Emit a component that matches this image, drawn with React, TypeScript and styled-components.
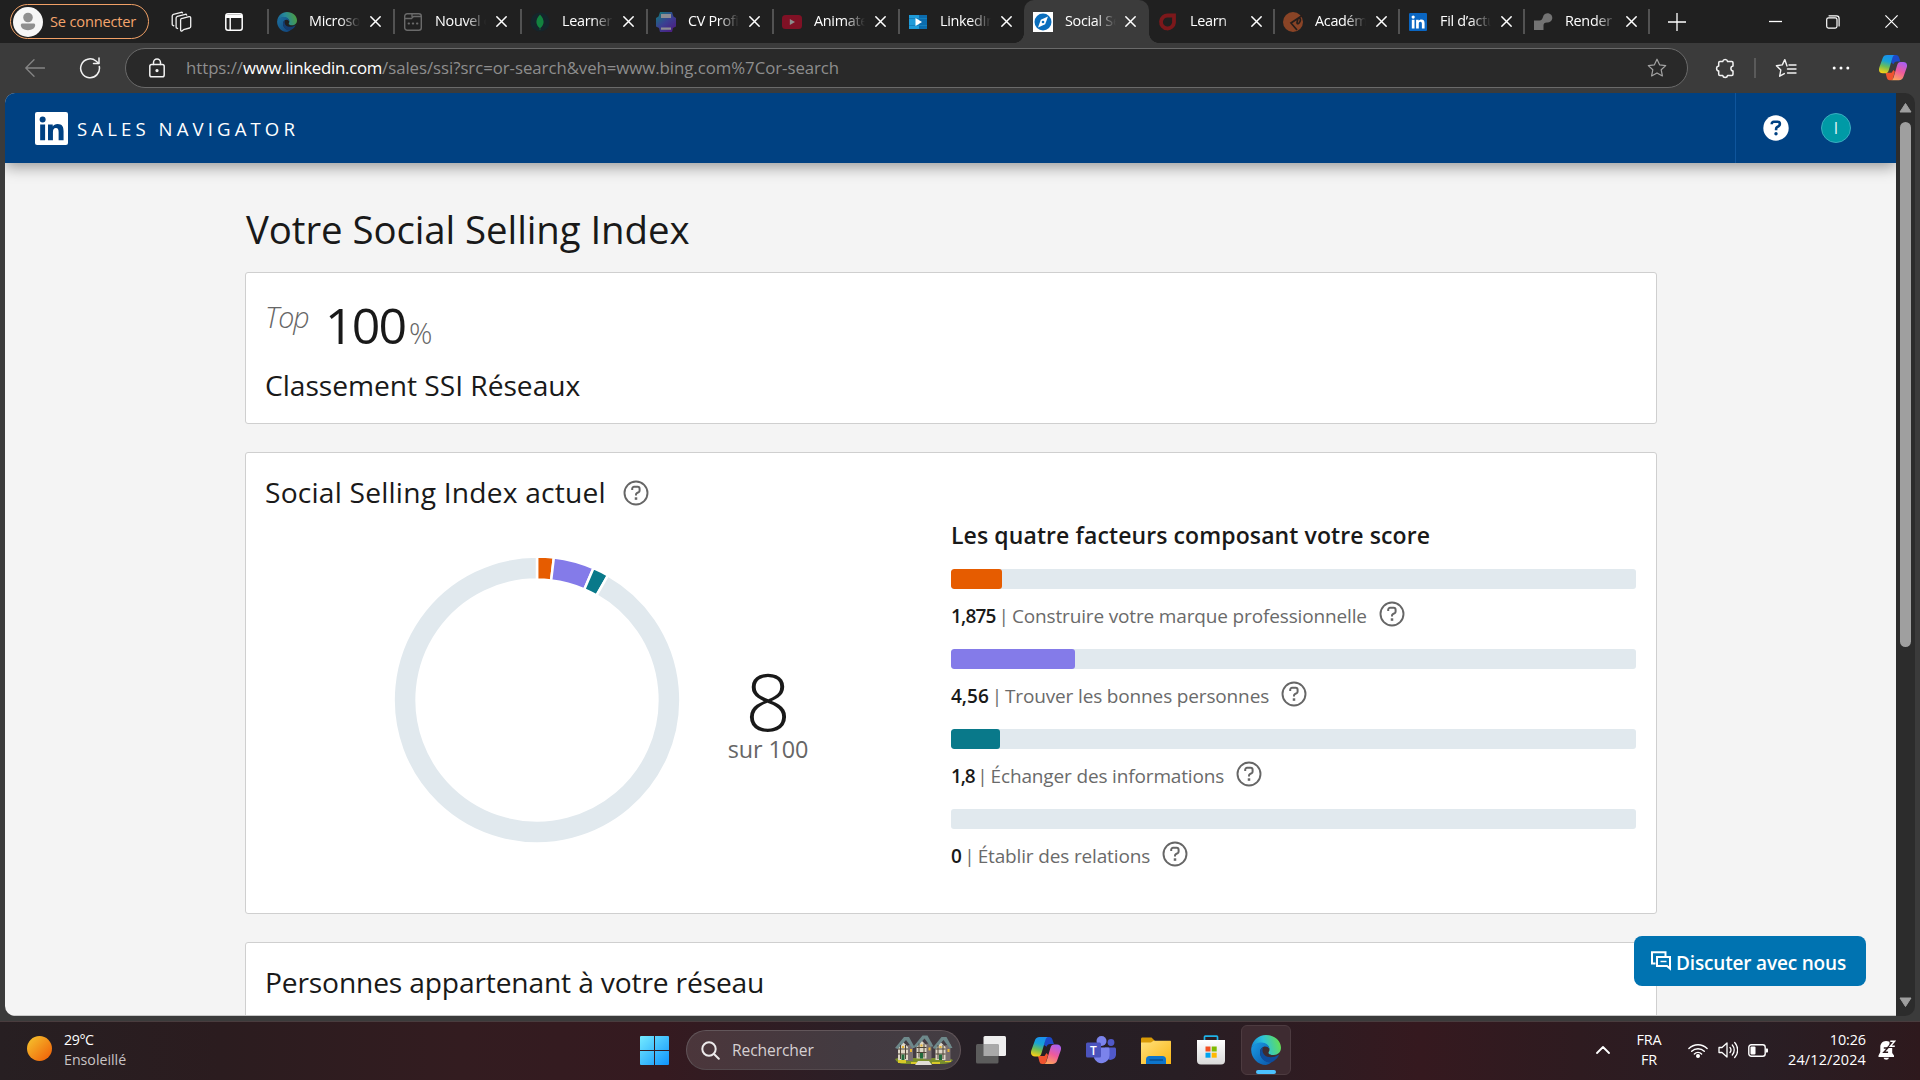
import React from "react";
import styled, { createGlobalStyle } from "styled-components";

const GlobalStyle = createGlobalStyle`
  * { box-sizing: border-box; }
  body {
    margin: 0;
    background: #3b3b3b;
    font-family: "Open Sans", "Noto Sans", sans-serif;
    overflow: hidden;
  }
  svg { display: block; flex: none; }
`;

const Screen = styled.div`
  width: 1920px;
  height: 1080px;
  display: flex;
  flex-direction: column;
  overflow: hidden;
`;

const Text = styled.span<{ $size: number; $ls?: number; $color?: string; $weight?: number; $lh?: number }>`
  font-size: ${(p) => p.$size}px;
  letter-spacing: ${(p) => p.$ls ?? 0}px;
  color: ${(p) => p.$color ?? "inherit"};
  font-weight: ${(p) => p.$weight ?? 400};
  line-height: ${(p) => (p.$lh ? `${p.$lh}px` : "normal")};
  white-space: pre;
`;

/* ---------- tab strip ---------- */

const TabStrip = styled.div`
  height: 43px;
  flex: none;
  background: #202020;
  display: flex;
  align-items: center;
`;

const SignIn = styled.div`
  width: 139px;
  height: 35px;
  margin-left: 10px;
  padding-left: 2px;
  border: 1px solid #f0a066;
  border-radius: 18px;
  display: flex;
  align-items: center;
  gap: 7px;
  color: #f4a56d;
`;

const SignInLabel = styled.span`
  padding-bottom: 2px;
  font-size: 14.6px;
  letter-spacing: -0.17px;
  white-space: pre;
`;

const IconSlot = styled.div<{ $w: number; $end?: boolean; $mr?: number }>`
  width: ${(p) => p.$w}px;
  margin-right: ${(p) => p.$mr ?? 0}px;
  flex: none;
  display: flex;
  justify-content: ${(p) => (p.$end ? "flex-end" : "center")};
  align-items: center;
`;

const TabBox = styled.div<{ $w: number; $active?: boolean; $line?: boolean }>`
  width: ${(p) => p.$w}px;
  height: 43px;
  flex: none;
  display: flex;
  align-items: center;
  padding-left: 9px;
  position: relative;
  background: ${(p) => (p.$active ? "#3b3b3b" : "transparent")};
  border-radius: ${(p) => (p.$active ? "10px 10px 0 0" : "0")};
  &::before {
    content: "";
    display: ${(p) => (p.$line ? "block" : "none")};
    position: absolute;
    left: -1px;
    top: 9px;
    width: 2px;
    height: 25px;
    background: #525252;
  }
`;

const Flare = styled.i<{ $side: "left" | "right" }>`
  position: absolute;
  bottom: 0;
  ${(p) => p.$side}: -10px;
  width: 10px;
  height: 10px;
  background: radial-gradient(circle at ${(p) => (p.$side === "left" ? "0 0" : "100% 0")}, #202020 9.6px, #3b3b3b 10.2px);
`;

const TabTitle = styled.span<{ $gap: number }>`
  width: 51px;
  margin: 0 ${(p) => p.$gap}px 2px 12px;
  font-size: 14.4px;
  letter-spacing: -0.3px;
  line-height: 20px;
  color: #fff;
  overflow: hidden;
  white-space: pre;
  mask-image: linear-gradient(90deg, #000 60%, transparent 100%);
`;

const WindowButtons = styled.div`
  margin-left: auto;
  display: flex;
  & > div { width: 58px; display: flex; justify-content: center; }
`;

/* ---------- toolbar ---------- */

const Toolbar = styled.div`
  height: 50px;
  flex: none;
  background: #3b3b3b;
  display: flex;
  align-items: center;
`;

const AddressBar = styled.div`
  width: 1563px;
  height: 40px;
  flex: none;
  margin-left: 16px;
  border: 1px solid #6a6a6a;
  border-radius: 20px;
  background: #292929;
  display: flex;
  align-items: center;
  padding: 0 20px 0 23px;
`;

const Url = styled.div`
  flex: 1;
  margin-left: 21px;
  font-size: 16.8px;
  letter-spacing: -0.04px;
  line-height: 26px;
  color: #8e8e8e;
  & b { font-weight: 400; color: #fff; letter-spacing: -0.26px; }
`;

const ToolDivider = styled.i`
  width: 2px;
  height: 20px;
  margin-left: -8px;
  background: #5a5a5a;
`;

/* ---------- page ---------- */

const Frame = styled.div`
  height: 928px;
  flex: none;
  background: #3b3b3b;
  padding: 0 5px 5px;
`;

const Viewport = styled.div`
  height: 923px;
  display: flex;
  border-radius: 10px;
  overflow: hidden;
  background: #2c2c2c;
`;

const Page = styled.div`
  width: 1891px;
  height: 923px;
  position: relative;
  background: #f4f4f4;
  overflow: hidden;
  color: #191919;
  border-bottom: 1px solid #c9c9c9;
`;

const Header = styled.header`
  height: 70px;
  background: #004182;
  display: flex;
  align-items: center;
  padding-left: 30px;
  box-shadow: 0 4px 14px rgba(0, 0, 0, 0.38);
  position: relative;
`;

const Brand = styled.div`
  margin: 2px 0 0 9px;
  font-size: 18.6px;
  letter-spacing: 4.1px;
  line-height: 26px;
  color: #fff;
`;

const HeaderActions = styled.div`
  width: 161px;
  height: 70px;
  margin-left: auto;
  border-left: 1px solid #0f559c;
  display: flex;
  align-items: center;
  padding-left: 27px;
  gap: 32px;
`;

const Avatar = styled.div`
  width: 30px;
  height: 30px;
  border-radius: 50%;
  background: #009aa6;
  border: 1px solid #3badc0;
  display: flex;
  align-items: center;
  justify-content: center;
  color: #e8f7f8;
  font-size: 15.5px;
  line-height: 28px;
`;

const Main = styled.main`
  width: 1412px;
  margin-left: 240px;
  padding-top: 41px;
`;

const Title = styled.h1`
  margin: 0 0 18px;
  padding-left: 1px;
  font-weight: 400;
  font-size: 38.4px;
  letter-spacing: -0.08px;
  line-height: 50px;
`;

const Card = styled.section<{ $h: number }>`
  height: ${(p) => p.$h}px;
  margin-bottom: 28px;
  padding: 0 20px 0 19px;
  background: #fff;
  border: 1px solid #cfcfcf;
  border-radius: 3px;
`;

const Heading = styled.h2<{ $ls: number }>`
  margin: 0;
  font-weight: 400;
  font-size: 28.2px;
  letter-spacing: ${(p) => p.$ls}px;
  line-height: 40px;
  white-space: pre;
`;

const HeadingRow = styled.div`
  display: flex;
  align-items: center;
  gap: 17px;
  padding-top: 19px;
  & svg { margin-top: 2px; }
`;

const RankRow = styled.div`
  height: 70px;
  padding-top: 23px;
  margin-bottom: 22px;
  display: flex;
  align-items: baseline;
`;

const TopLabel = styled.em`
  align-self: flex-start;
  width: 60px;
  font-weight: 350;
  font-size: 28.6px;
  letter-spacing: -0.9px;
  line-height: 42px;
  color: #666;
`;

const Rank = styled.span`
  width: 84px;
  font-size: 50px;
  letter-spacing: -1.9px;
  line-height: 58px;
`;

const Percent = styled.span`
  font-weight: 350;
  font-size: 29px;
  color: #666;
`;

const ScoreBody = styled.div`
  display: flex;
  height: 400px;
`;

const ChartSide = styled.div`
  width: 685px;
  display: flex;
  padding: 44px 0 0 128px;
`;

const ScoreBlock = styled.div`
  width: 120px;
  margin: 112px 0 0 27px;
  display: flex;
  flex-direction: column;
  align-items: center;
`;

const FactorSide = styled.div`
  width: 685px;
  flex: none;
  margin-left: auto;
  padding-top: 6px;
`;

const FactorTitle = styled.h3`
  margin: 0 0 17px;
  font-weight: 600;
  font-size: 23px;
  letter-spacing: 0.1px;
  line-height: 34px;
  white-space: pre;
`;

const Factor = styled.div`
  height: 80px;
`;

const Track = styled.div`
  height: 20px;
  margin-bottom: 6px;
  border-radius: 3px;
  background: #e1e9ee;
  overflow: hidden;
`;

const Fill = styled.div<{ $w: number; $c: string }>`
  width: ${(p) => p.$w}px;
  height: 20px;
  border-radius: 3px;
  background: ${(p) => p.$c};
`;

const FactorLabel = styled.div`
  height: 38px;
  display: flex;
  align-items: center;
`;

const FactorText = styled.span<{ $ls: number }>`
  font-size: 19px;
  line-height: 38px;
  letter-spacing: -0.15px;
  color: #6a6a6a;
  padding-top: 3px;
  margin-right: 12px;
  white-space: pre;
  & b { font-weight: 600; color: #191919; letter-spacing: ${(p) => p.$ls}px; }
  & i { font-style: normal; word-spacing: -1.8px; }
`;

const ChatButton = styled.button`
  position: absolute;
  left: 1629px;
  top: 843px;
  width: 232px;
  height: 50px;
  border: 0;
  border-radius: 8px;
  background: #0073b1;
  color: #fff;
  font-family: inherit;
  display: flex;
  align-items: center;
  padding: 0 0 0 17px;
  gap: 5px;
  & span { padding-top: 4px; }
`;

const ScrollRail = styled.div`
  width: 19px;
  display: flex;
  flex-direction: column;
  align-items: center;
  padding: 10px 0 9px;
`;

const Thumb = styled.div`
  width: 11px;
  height: 525px;
  margin: 9px 0 auto;
  border-radius: 6px;
  background: #9f9f9f;
`;

/* ---------- taskbar ---------- */

const Taskbar = styled.footer`
  height: 59px;
  flex: none;
  border-top: 1px solid #493c3e;
  padding-bottom: 2px;
  background: linear-gradient(90deg, #271f22 0, #2b1c1f 220px, #331c20 460px, #351a20 660px, #2b1f26 860px, #251f25 1000px, #281e24 1180px, #35191f 1420px, #2e1b20 1580px, #291e24 1760px, #2e191d 1920px);
  display: flex;
  align-items: center;
  color: #fff;
`;

const Weather = styled.div`
  width: 613px;
  padding-left: 27px;
  display: flex;
  align-items: center;
  gap: 12px;
`;

const Sun = styled.i`
  width: 25px;
  height: 25px;
  margin-bottom: 3px;
  border-radius: 50%;
  background: linear-gradient(135deg, #f5bd2b 10%, #f06a0c 85%);
`;

const Stack = styled.div<{ $align?: string; $w?: number }>`
  display: flex;
  flex-direction: column;
  align-items: ${(p) => p.$align ?? "flex-start"};
  width: ${(p) => (p.$w ? `${p.$w}px` : "auto")};
`;

const SearchBox = styled.div`
  width: 275px;
  height: 40px;
  margin: 0 15px 0 17px;
  padding: 0 7px 0 14px;
  border: 1px solid #62565a;
  border-bottom-color: #54494d;
  border-radius: 20px;
  background: linear-gradient(90deg, #4b363b, #433b41 60%, #443d43);
  display: flex;
  align-items: center;
`;

const SearchLabel = styled.span`
  flex: 1;
  margin-left: 12px;
  font-size: 15.6px;
  letter-spacing: -0.1px;
  color: #d6d0d2;
`;

const TaskIcons = styled.div`
  display: flex;
  align-items: center;
`;

const EdgeSlot = styled.span`
  width: 50px;
  height: 50px;
  border: 1px solid #4d3b40;
  border-radius: 6px;
  background: #3e2b31;
  display: flex;
  flex-direction: column;
  align-items: center;
  padding-top: 9px;
`;

const RunningBar = styled.i`
  width: 20px;
  height: 4px;
  margin-top: 5px;
  border-radius: 2px;
  background: #4cc2ff;
`;

const Tray = styled.div`
  margin-left: auto;
  display: flex;
  align-items: center;
  padding-right: 24px;
`;

/* ---------- drawings ---------- */

const stroke = { fill: "none", strokeLinecap: "round" as const, strokeLinejoin: "round" as const };

const Cross = ({ size = 10, color = "#fff", w = 1.5 }: { size?: number; color?: string; w?: number }) => (
  <svg width={size} height={size} viewBox="0 0 10 10">
    <path d="M.3.3l9.4 9.4M9.7.3L.3 9.7" stroke={color} strokeWidth={(w * 10) / size} fill="none" />
  </svg>
);

const HelpOutline = () => (
  <svg width="26" height="26" viewBox="0 0 26 26" fill="none" strokeLinejoin="round" stroke="#666">
    <circle cx="13" cy="13" r="11.5" strokeWidth="1.9" />
    <path d="M9.2 10V8.7c0-1.1.8-1.9 1.9-1.9h3.600c1.100 0 1.900.8 1.900 1.900v1.800c0 .7-.3 1.200-.9 1.600l-1.800 1.100c-.6.4-.9.8-.9 1.500v.9" strokeWidth="2" />
    <path d="M13 17.300v2.500" strokeWidth="2.500" />
  </svg>
);

const InLogo = ({ size, bg, fg }: { size: number; bg: string; fg: string }) => (
  <svg width={size} height={size} viewBox="0 0 32 32">
    <rect width="32" height="32" rx="2" fill={bg} />
    <circle cx="7.400" cy="7.300" r="2.900" fill={fg} />
    <path fill={fg} d="M5 12h4.800v15.400H5zM12.600 12h4.600v2.100c.8-1.400 2.500-2.500 4.700-2.500 4.500 0 5.800 2.700 5.800 7v8.800h-4.800v-7.800c0-2.300-.5-4-2.600-4-2.200 0-2.900 1.600-2.900 4v7.800h-4.800z" />
  </svg>
);

const EdgeLogo = ({ size, id }: { size: number; id: string }) => (
  <svg width={size} height={size} viewBox="0 0 30 30">
    <defs>
      <linearGradient id={`${id}t`} x1="0" y1=".6" x2="1" y2=".4">
        <stop offset="0" stopColor="#1688d8" />
        <stop offset=".45" stopColor="#2cc3da" />
        <stop offset="1" stopColor="#66e04f" />
      </linearGradient>
      <linearGradient id={`${id}b`} x1="0" y1="0" x2="1" y2="1">
        <stop offset="0" stopColor="#1a9de6" />
        <stop offset="1" stopColor="#0b55a8" />
      </linearGradient>
    </defs>
    <path fill={`url(#${id}t)`} d="M.3 13.200C1.200 5.500 7.300 0 15 0c8.700 0 15 6 15 12.800 0 4.200-3.200 7.200-7.200 7.200-3.400 0-5.300-1-5.300-2.300 0-.7 1-1.100 1-3.100 0-3.400-3.400-6.300-8-6.300C5.600 8.300 1.700 10.600.3 13.200z" />
    <path fill={`url(#${id}b)`} d="M.3 13.200C1.500 9.900 5.600 7.400 10.500 7.400c4.700 0 8 3 8 6.800-1-1.900-2.700-2.600-4.200-2.600-3 0-5.300 2.500-5.300 6 0 5.800 5.800 9.900 11.600 9.700A14.500 14.500 0 0 1 15 30C6.400 30-.8 22 .3 13.200z" />
    <path fill="#0e4c9c" d="M9 17.600c0-2.500 1-4.500 3.200-5.600-.5 1-.7 2-.7 3.300 0 4.200 3.600 7 8.100 7 2.900 0 5.300-.8 7.400-2.200.6-.3 1 .1.7.7-1.700 3.100-4.500 5.600-7.900 6.700C14 28 9 23.200 9 17.600z" />
  </svg>
);

const Copilot = ({ w, id }: { w: number; id: string }) => (
  <svg width={w} height={(w * 27) / 30} viewBox="0 0 30 27">
    <defs>
      <linearGradient id={`${id}a`} x1=".6" y1="0" x2=".35" y2="1">
        <stop offset="0" stopColor="#1a8fee" />
        <stop offset=".35" stopColor="#17a3d6" />
        <stop offset=".65" stopColor="#6dbd56" />
        <stop offset="1" stopColor="#f6cf17" />
      </linearGradient>
      <linearGradient id={`${id}b`} x1=".7" y1="0" x2=".3" y2="1">
        <stop offset="0" stopColor="#a95ff0" />
        <stop offset=".5" stopColor="#ee5a9c" />
        <stop offset="1" stopColor="#ffa35c" />
      </linearGradient>
    </defs>
    <path fill="#1c49c8" d="M14 0h4.200c1.900 0 2.700 1 3.300 2.800L22.900 7h-3.700c-2 0-3 1-3.600 2.800L13 8z" />
    <path fill="#f0532f" d="M7 19h6.500l2-3 1.500 2-2 7.300c-.4 1.200-1 1.700-2.200 1.700h-1.500c-1.700 0-2.400-.8-2.900-2.500z" />
    <path fill={`url(#${id}a)`} d="M8.800 0h8.400c-1.500.2-2.300 1.300-2.800 3l-3.900 13.300c-.7 2.200-1.600 3.200-3.700 3.200H4c-3.500 0-4.700-2.700-3.700-6L3.800 3.700C4.600 1.200 6 0 8.800 0z" />
    <path fill={`url(#${id}b)`} d="M21.200 27h-8.400c1.500-.2 2.300-1.300 2.800-3l3.900-13.300c.7-2.200 1.600-3.200 3.700-3.200H26c3.500 0 4.700 2.700 3.700 6l-3.500 9.800c-.8 2.500-2.200 3.700-5 3.700z" />
  </svg>
);

const FadedEdge = styled.span`
  display: block;
  opacity: 0.65;
`;

const Favicon = ({ kind }: { kind: string }) => {
  switch (kind) {
    case "edge":
      return <FadedEdge><EdgeLogo size={20} id="ft" /></FadedEdge>;
    case "newtab":
      return (
        <svg width="20" height="20" viewBox="0 0 20 20" {...stroke} stroke="#6a6a6a" strokeWidth="1.400">
          <rect x="1.700" y="1.700" width="16.600" height="16.600" rx="2.500" />
          <path d="M2 6.500h6.500l2-2H18M9 2v2.500" />
          <path d="M5.500 11.500h.6M9.700 11.500h.6M13.900 11.500h.6" strokeWidth="1.800" />
        </svg>
      );
    case "mongo":
      return (
        <svg width="20" height="20" viewBox="0 0 20 20">
          <circle cx="10" cy="10" r="9.500" fill="#15252b" />
          <path fill="#12833f" d="M10 2.500c2.500 2.800 3.600 5 3.600 7.500 0 2.600-1.600 4.700-3.300 6V18h-.6v-2c-1.700-1.300-3.300-3.400-3.300-6 0-2.500 1.100-4.700 3.600-7.500z" />
        </svg>
      );
    case "cv":
      return (
        <svg width="20" height="20" viewBox="0 0 20 20">
          <defs>
            <linearGradient id="cvg" x1="0" y1="0" x2=".8" y2="1">
              <stop offset="0" stopColor="#0d8078" />
              <stop offset=".55" stopColor="#3b3f92" />
              <stop offset="1" stopColor="#4c1d80" />
            </linearGradient>
          </defs>
          <path fill="url(#cvg)" d="M4 0h12l1.500 4.500L20 6v8.500l-3 1.500-1 4H4l-1-4-3-1.500V6l2.500-1.500z" />
          <path fill="#8d8d94" d="M5 2h10v4H5zM5 15.500h10v2.300H5z" />
        </svg>
      );
    case "youtube":
      return (
        <svg width="20" height="20" viewBox="0 0 20 20">
          <rect y="3" width="20" height="14" rx="3.500" fill="#801125" />
          <path d="M7.800 7v6l5.200-3z" fill="#8d8d8d" />
        </svg>
      );
    case "learning":
      return (
        <svg width="20" height="20" viewBox="0 0 20 20">
          <path fill="#1f9bd8" d="M1 3h18v14H1z" />
          <path fill="#0b6cae" d="M11 3h8v14h-8z" />
          <path stroke="#1580bd" d="M1 6.500h18M1 13.500h18" />
          <path d="M7.500 6v8l6.500-4z" fill="#fff" />
        </svg>
      );
    case "compass":
      return (
        <svg width="20" height="20" viewBox="0 0 20 20">
          <path fill="#fff" d="M0 0h20v20H0z" />
          <circle cx="10" cy="10" r="8.500" fill="#0a6ebd" />
          <path fill="#fff" d="M15 4.500l-2.800 7.700L5 15.500l2.800-7.700z" />
          <circle cx="10" cy="10" r="1.300" fill="#0a6ebd" />
        </svg>
      );
    case "learn":
      return (
        <svg width="20" height="20" viewBox="0 0 20 20">
          <path d="M10 3.500h6v7A6.500 6.500 0 1 1 10 3.500z" fill="none" stroke="#7c181b" strokeWidth="3.800" />
        </svg>
      );
    case "academy":
      return (
        <svg width="20" height="20" viewBox="0 0 20 20">
          <circle cx="10" cy="10" r="10" fill="#8a4426" />
          <path d="M20 3L8 11l6 7M15 6.500c2-1 3 .5 2 3s-3 3-3 1z" fill="none" stroke="#271e1b" strokeWidth="1.700" />
        </svg>
      );
    case "linkedin":
      return <InLogo size={18} bg="#0a66c2" fg="#fff" />;
    default:
      return (
        <svg width="20" height="20" viewBox="0 0 20 20">
          <path fill="#737373" d="M1 8.500h5.500c2-.2 3-1.500 3.500-3.500A4.700 4.700 0 1 1 14 10.500c-2.500 0-3.500 1-3.500 3V18H1z" />
        </svg>
      );
  }
};

const tabs = [
  { t: "Microsoft", k: "edge", w: 126 },
  { t: "Nouvel onglet", k: "newtab", w: 127 },
  { t: "Learner", k: "mongo", w: 126 },
  { t: "CV Profil", k: "cv", w: 126 },
  { t: "Animated", k: "youtube", w: 126 },
  { t: "LinkedIn", k: "learning", w: 125 },
  { t: "Social Selling", k: "compass", w: 125 },
  { t: "Learn", k: "learn", w: 125 },
  { t: "Académie", k: "academy", w: 125 },
  { t: "Fil d’actualité", k: "linkedin", w: 125 },
  { t: "Render", k: "render", w: 125 },
];

const TabRow = () => (
  <TabStrip>
    <SignIn>
      <svg width="30" height="30" viewBox="0 0 30 30">
        <circle cx="15" cy="15" r="15" fill="#f7f7f7" />
        <circle cx="15" cy="10.500" r="4.800" fill="#909090" />
        <path fill="#909090" d="M9.500 16.500h11c1 0 1.700.7 1.700 1.600 0 3-3 5.200-7.200 5.200s-7.200-2.200-7.200-5.200c0-.9.700-1.600 1.700-1.600z" />
      </svg>
      <SignInLabel>Se connecter</SignInLabel>
    </SignIn>
    <IconSlot $w={64}>
      <svg width="22" height="22" viewBox="0 0 22 22" {...stroke} stroke="#f0f0f0" strokeWidth="1.300">
        <path d="M12.500 7.300l6.500-1.600c.9-.2 1.700.3 1.700 1.300v8.600c0 .7-.4 1.200-1 1.400l-6.200 1.700-1.500 1.200c-.8.5-1.400 0-1.400-.8V9c0-.9.500-1.500 1.300-1.700z" />
        <path d="M7.600 17.500l-.7-.3c-.6-.2-.8-.6-.8-1.200V7c0-.9.400-1.400 1.200-1.700l8-2c.7-.1 1.200.1 1.400.8M3.800 14.800l-.8-.4c-.6-.2-.8-.6-.8-1.200V5c0-.9.400-1.400 1.200-1.700l7.800-2c.6-.1 1 0 1.300.5" />
      </svg>
    </IconSlot>
    <IconSlot $w={41}>
      <svg width="18" height="18" viewBox="0 0 18 18">
        <rect x=".8" y=".8" width="16.400" height="16.400" rx="2.200" fill="none" stroke="#fff" strokeWidth="1.500" />
        <path fill="#fff" d="M1 1.500h16V5H1zM4.500 5h1.400v12H4.500z" />
      </svg>
    </IconSlot>
    <IconSlot $w={14} />
    {tabs.map((tab, i) => (
      <TabBox key={tab.t} $w={tab.w} $active={i === 6} $line={i !== 6 && i !== 7}>
        {i === 6 && <Flare $side="left" />}
        {i === 6 && <Flare $side="right" />}
        <IconSlot $w={20}><Favicon kind={tab.k} /></IconSlot>
        <TabTitle $gap={i === 6 ? 9 : 10}>{tab.t}</TabTitle>
        <Cross size={11} />
      </TabBox>
    ))}
    <TabBox $w={56} $line>
      <IconSlot $w={38}>
        <svg width="18" height="18" viewBox="0 0 18 18"><path d="M9 0v18M0 9h18" stroke="#fff" strokeWidth="1.300" /></svg>
      </IconSlot>
    </TabBox>
    <WindowButtons>
      <div><svg width="13" height="12"><path d="M0 6.500h13" stroke="#fff" strokeWidth="1.300" /></svg></div>
      <div>
        <svg width="14" height="14" viewBox="0 0 14 14" {...stroke} stroke="#fff" strokeWidth="1.200">
          <rect x=".7" y="2.800" width="10.300" height="10.300" rx="1.800" />
          <path d="M3 .8h7.500c1.600 0 2.600 1 2.600 2.600V11" />
        </svg>
      </div>
      <div><Cross size={13} w={1.2} /></div>
    </WindowButtons>
  </TabStrip>
);

const star = "M10 1.200l2.600 5.600 6.100.8-4.500 4.200 1.200 6.100L10 14.900l-5.400 3 1.200-6.100L1.300 7.600l6.100-.8z";

const ToolRow = () => (
  <Toolbar>
    <IconSlot $w={70}>
      <svg width="20" height="18" viewBox="0 0 20 18" {...stroke} stroke="#858585" strokeWidth="1.300"><path d="M9 .7L.8 9 9 17.300M1 9h18.500" /></svg>
    </IconSlot>
    <IconSlot $w={39}>
      <svg width="22" height="22" viewBox="0 0 22 22" {...stroke} stroke="#f2f2f2" strokeWidth="1.500">
        <path d="M20.300 9.500A9.400 9.400 0 1 1 17 4l2.500 2.300" />
        <path d="M20 1v5.500h-5.500" />
      </svg>
    </IconSlot>
    <AddressBar>
      <svg width="16" height="20" viewBox="0 0 16 20" {...stroke} stroke="#f2f2f2" strokeWidth="1.500">
        <rect x=".8" y="6.500" width="14.400" height="12.200" rx="1.800" />
        <path d="M4.500 6.500V4.500a3.500 3.500 0 0 1 7 0v2" />
        <circle cx="8" cy="12.600" r=".9" fill="#fff" />
      </svg>
      <Url>https://<b>www.linkedin.com</b>/sales/ssi?src=or-search&amp;veh=www.bing.com%7Cor-search</Url>
      <svg width="20" height="20" viewBox="0 0 20 20" {...stroke} stroke="#a3a3a3" strokeWidth="1.200"><path d={star} /></svg>
    </AddressBar>
    <IconSlot $w={74}>
      <svg width="20" height="21" viewBox="0 0 20 21" {...stroke} stroke="#f2f2f2" strokeWidth="1.500">
        <path d="M4.900 3.500h2.800a2.500 2.500 0 0 1 4.900 0h4.200c.7 0 1.200.5 1.200 1.200v3.200a2.600 2.600 0 0 0 0 5.100v3.300c0 .7-.5 1.200-1.200 1.200h-4.200a2.500 2.500 0 0 1-4.900 0H4.900c-.7 0-1.200-.5-1.200-1.200V13a2.600 2.600 0 0 1 0-5.100V4.700c0-.7.5-1.200 1.200-1.200z" />
      </svg>
    </IconSlot>
    <ToolDivider />
    <IconSlot $w={60}>
      <svg width="22" height="20" viewBox="0 0 22 20" {...stroke} stroke="#f2f2f2" strokeWidth="1.400">
        <path d="M12 8L9.800 1.600 7.300 6.900l-5.900.8L5.800 12l-1.100 6.200 4.600-2.600M14 7h7M12.500 11h8.500M12.500 15h8.500" />
      </svg>
    </IconSlot>
    <IconSlot $w={49}>
      <svg width="18" height="4" viewBox="0 0 18 4" fill="#fff"><circle cx="2.200" cy="2" r="1.500" /><circle cx="9" cy="2" r="1.500" /><circle cx="15.800" cy="2" r="1.500" /></svg>
    </IconSlot>
    <IconSlot $w={55}><Copilot w={28} id="ct" /></IconSlot>
  </Toolbar>
);

const ring = [
  { v: 1.875, c: "#e65c00" },
  { v: 4.56, c: "#847be9" },
  { v: 1.8, c: "#09798a" },
  { v: 91.765, c: "#e1e9ee" },
];

const Donut = () => {
  const R = 143.4;
  const r = 120.4;
  const c = 144;
  let acc = 0;
  const pt = (rad: number, a: number) => `${(c + rad * Math.sin(a)).toFixed(2)} ${(c - rad * Math.cos(a)).toFixed(2)}`;
  return (
    <svg width="288" height="288" viewBox="0 0 288 288">
      {ring.map((s) => {
        const a0 = (acc / 100) * Math.PI * 2;
        acc += s.v;
        const a1 = (acc / 100) * Math.PI * 2;
        const big = a1 - a0 > Math.PI ? 1 : 0;
        return (
          <path
            key={s.c}
            d={`M${pt(R, a0)}A${R} ${R} 0 ${big} 1 ${pt(R, a1)}L${pt(r, a1)}A${r} ${r} 0 ${big} 0 ${pt(r, a0)}Z`}
            fill={s.c}
            stroke="#fff"
            strokeWidth="2.500"
          />
        );
      })}
    </svg>
  );
};

const factors = [
  { n: "1,875", t: "Construire votre marque professionnelle", w: 51, c: "#e65c00", ls: -0.8 },
  { n: "4,56", t: "Trouver les bonnes personnes", w: 124, c: "#847be9", ls: 0 },
  { n: "1,8", t: "Échanger des informations", w: 49, c: "#09798a", ls: -1.2 },
  { n: "0", t: "Établir des relations", w: 0, c: "transparent", ls: -0.5 },
];

const SalesPage = () => (
  <Page>
    <Header>
      <InLogo size={33} bg="#fff" fg="#004182" />
      <Brand>SALES NAVIGATOR</Brand>
      <HeaderActions>
        <svg width="26" height="26" viewBox="0 0 26 26">
          <circle cx="13" cy="13" r="12.700" fill="#fff" />
          <path d="M8.800 9.300V8.700c0-1.100.8-1.900 1.900-1.900h4c1.300 0 2.200.9 2.200 2.100 0 1-.4 1.600-1.200 2.200l-1.600 1c-.7.500-1 1-1 1.900v1.200" fill="none" stroke="#004182" strokeWidth="2.600" />
          <circle cx="13" cy="18.800" r="1.700" fill="#004182" />
        </svg>
        <Avatar>I</Avatar>
      </HeaderActions>
    </Header>
    <Main>
      <Title>Votre Social Selling Index</Title>
      <Card $h={152}>
        <RankRow>
          <TopLabel>Top</TopLabel>
          <Rank>100</Rank>
          <Percent>%</Percent>
        </RankRow>
        <Heading $ls={-0.04}>Classement SSI Réseaux</Heading>
      </Card>
      <Card $h={462}>
        <HeadingRow>
          <Heading $ls={0.2}>Social Selling Index actuel</Heading>
          <HelpOutline />
        </HeadingRow>
        <ScoreBody>
          <ChartSide>
            <Donut />
            <ScoreBlock>
              <Text $size={80} $weight={300} $lh={64}>8</Text>
              <Text $size={23.4} $ls={-0.1} $color="#666" $lh={34}>sur 100</Text>
            </ScoreBlock>
          </ChartSide>
          <FactorSide>
            <FactorTitle>Les quatre facteurs composant votre score</FactorTitle>
            {factors.map((f) => (
              <Factor key={f.t}>
                <Track><Fill $w={f.w} $c={f.c} /></Track>
                <FactorLabel>
                  <FactorText $ls={f.ls}><b>{f.n}</b><i> | </i>{f.t}</FactorText>
                  <HelpOutline />
                </FactorLabel>
              </Factor>
            ))}
          </FactorSide>
        </ScoreBody>
      </Card>
      <Card $h={200}>
        <HeadingRow><Heading $ls={-0.16}>Personnes appartenant à votre réseau</Heading></HeadingRow>
      </Card>
    </Main>
    <ChatButton>
      <svg width="20" height="20" viewBox="0 0 20 20" fill="none" stroke="#fff">
        <path d="M4.500 12.500H1V1.200h13.500V5" strokeWidth="2" />
        <path d="M6 6h13v11.500l-3-2.500H6z" strokeWidth="2" />
        <path d="M9.500 10.500h6" strokeWidth="1.500" />
      </svg>
      <Text $size={19} $ls={-0.17} $weight={600} $lh={26}>Discuter avec nous</Text>
    </ChatButton>
  </Page>
);

const Houses = () => (
  <svg width="58" height="30" viewBox="0 0 58 30">
    <path fill="#7b8f2c" d="M0 24q6-3 12-1h34q8-1 12 2-2 4-12 4H10Q2 29 0 24z" />
    <path fill="#d9c928" d="M3 25h8v3H3zM16 27h6v2h-6zM37 27h8v2h-8zM50 25h6v2h-6z" />
    <path fill="#e0dcd6" d="M23 26h11l3 4H20z" />
    {[2, 20.5, 39.5].map((x, i) => (
      <g key={x} transform={`translate(${x} ${i === 1 ? -1.5 : 0})`}>
        <path fill="#796f70" d="M9 11l7-2v17H9z" />
        <path fill="#ddd6c6" d="M1 12l5-5 5 5v13H1z" />
        <path fill="#6e898b" d="M-2 13L7 2h5l6 11h-3L9 5 1 14z" />
        <path d="M1 14h10M1 19h10M3.500 10v14M8.500 10v14" stroke="#4e4436" strokeWidth="1" />
        <path fill="#e9b735" d="M5 11h2v2H5zM13 14h2v3h-2z" />
        <path fill="#216b3c" d="M4.500 19.500h3V25h-3z" />
      </g>
    ))}
  </svg>
);

const TaskRow = () => (
  <Taskbar>
    <Weather>
      <Sun />
      <Stack>
        <Text $size={14.2} $ls={-0.4} $lh={20}>29°C</Text>
        <Text $size={14.2} $ls={0} $lh={20} $color="#c9c4c5">Ensoleillé</Text>
      </Stack>
    </Weather>
    <IconSlot $w={56} $end>
      <svg width="29" height="29" viewBox="0 0 29 29">
        <defs>
          <linearGradient id="win" x1="0" y1="0" x2="1" y2="1">
            <stop offset="0" stopColor="#74ebff" /><stop offset="1" stopColor="#0f93fb" />
          </linearGradient>
        </defs>
        <path fill="url(#win)" d="M1 0h13v14H0V1a1 1 0 0 1 1-1zM15 0h13a1 1 0 0 1 1 1v13H15zM0 15h14v14H1a1 1 0 0 1-1-1zM15 15h14v13a1 1 0 0 1-1 1H15z" />
      </svg>
    </IconSlot>
    <SearchBox>
      <svg width="19" height="19" viewBox="0 0 19 19" {...stroke} stroke="#eceaeb" strokeWidth="2">
        <circle cx="8" cy="8" r="6.700" /><path d="M13 13l4.800 4.800" />
      </svg>
      <SearchLabel>Rechercher</SearchLabel>
      <Houses />
    </SearchBox>
    <TaskIcons>
      <IconSlot $w={30} $mr={12}>
        <svg width="30" height="28" viewBox="0 0 30 28">
          <rect x="7.500" y="0" width="22.500" height="20" rx="1.500" fill="#eeeeee" />
          <rect x="0" y="8" width="22.500" height="19.500" rx="1.500" fill="#5c5c5c" />
          <path fill="#a9a9a9" d="M7.500 8h15v12h-15z" />
        </svg>
      </IconSlot>
      <IconSlot $w={55}><Copilot w={30} id="cb" /></IconSlot>
      <IconSlot $w={55}>
        <svg width="30" height="28" viewBox="0 0 30 28">
          <circle cx="25" cy="6.500" r="3.400" fill="#5059c9" />
          <circle cx="15.500" cy="5" r="5" fill="#7b83eb" />
          <path fill="#5059c9" d="M19 11.500h9.500c.8 0 1.500.6 1.500 1.500v5.500a5.500 5.500 0 0 1-10 3z" />
          <path fill="#7b83eb" d="M9 11.500h13c.9 0 1.500.6 1.500 1.500v6a8 8 0 0 1-15.500 3z" />
          <rect y="6.500" width="15" height="15" rx="1.500" fill="#4b53bc" />
          <text x="7.500" y="18.500" fill="#fff" fontSize="12" fontWeight="600" textAnchor="middle">T</text>
        </svg>
      </IconSlot>
      <IconSlot $w={55}>
        <svg width="30" height="27" viewBox="0 0 30 27">
          <defs><linearGradient id="fo" x1="0" y1="0" x2="1" y2="1"><stop offset="0" stopColor="#ffe17c" /><stop offset="1" stopColor="#fbb614" /></linearGradient></defs>
          <path fill="#d99a06" d="M0 2C0 1 .6.500 1.500.500h9L14 4v4H0z" />
          <path fill="url(#fo)" d="M0 5.500h10l2.500-1.700H29c.6 0 1 .4 1 1V27H0z" />
          <path fill="#0d75cc" d="M5 27v-4.500C5 20.500 6.200 19 8.500 19h13c2.300 0 3.500 1.500 3.500 3.500V27z" />
          <path fill="#084c8d" d="M8.500 22.300h13.500v1.400H8.500z" />
        </svg>
      </IconSlot>
      <IconSlot $w={55}>
        <svg width="30" height="30" viewBox="0 0 30 30">
          <defs><linearGradient id="st" x1="0" y1="0" x2="0" y2="1"><stop offset="0" stopColor="#fff" /><stop offset="1" stopColor="#d9d9d9" /></linearGradient></defs>
          <path d="M8.500 7V2c0-.5.200-.8.800-.8h11.400c.6 0 .8.300.8.800v5" fill="none" stroke="#1fb3e8" strokeWidth="1.700" />
          <path fill="url(#st)" d="M1 5h28v20.500c0 2.500-1.300 4-4 4H5c-2.700 0-4-1.500-4-4z" />
          <path fill="#f25022" d="M9.500 11.500h5v5h-5z" /><path fill="#7fba00" d="M15.700 11.500h5v5h-5z" />
          <path fill="#00a4ef" d="M9.500 17.700h5v5h-5z" /><path fill="#ffb900" d="M15.700 17.700h5v5h-5z" />
        </svg>
      </IconSlot>
      <IconSlot $w={55}><EdgeSlot><EdgeLogo size={30} id="eb" /><RunningBar /></EdgeSlot></IconSlot>
    </TaskIcons>
    <Tray>
      <svg width="14" height="8" viewBox="0 0 14 8" {...stroke} stroke="#fff" strokeWidth="1.800"><path d="M1 7l6-6 6 6" /></svg>
      <Stack $align="center" $w={78}>
        <Text $size={14.4} $lh={20} $ls={-0.1}>FRA</Text>
        <Text $size={14.4} $lh={20} $ls={-0.1}>FR</Text>
      </Stack>
      <svg width="20" height="15" viewBox="0 0 20 15" {...stroke} stroke="#fff" strokeWidth="1.400">
        <path d="M.9 5.500a13 13 0 0 1 18.200 0M3.700 8.300a9 9 0 0 1 12.600 0M6.400 11a5.200 5.200 0 0 1 7.200 0" />
        <circle cx="10" cy="13" r="1.300" fill="#fff" />
      </svg>
      <IconSlot $w={40}>
        <svg width="20" height="18" viewBox="0 0 20 18" {...stroke} stroke="#fff" strokeWidth="1.300">
          <path d="M1 6.500h3L9 2v14l-5-4.500H1zM12 6.500a4 4 0 0 1 0 5M14.300 4a7.500 7.500 0 0 1 0 10M16.700 1.500a11 11 0 0 1 0 15" />
        </svg>
      </IconSlot>
      <svg width="20" height="13" viewBox="0 0 20 13">
        <rect x=".8" y=".8" width="16.400" height="11.400" rx="2.500" fill="none" stroke="#fff" strokeWidth="1.400" />
        <rect x="2.500" y="2.500" width="5" height="8" rx="1" fill="#fff" /><path fill="#fff" d="M18 4.500h1.200c.5 0 .8.500.8 1v2c0 .5-.3 1-.8 1H18z" />
      </svg>
      <Stack $align="flex-end" $w={98}>
        <Text $size={14.4} $lh={20} $ls={-0.1}>10:26</Text>
        <Text $size={14.4} $lh={20} $ls={0.15}>24/12/2024</Text>
      </Stack>
      <IconSlot $w={30} $end>
        <svg width="18" height="20" viewBox="0 0 18 20">
          <path fill="#fff" d="M8 1C4.500 1 2.300 3.800 2.300 7v5L.5 15.500V17H16v-1.500L14.200 13V6.500L11.500 6V1.700C10.500 1.200 9 1 8 1zM5.500 17.800h5.500a2.800 2.300 0 0 1-5.500 0z" />
          <path d="M5.800 8h4L5.800 12.300h4.300" fill="none" stroke="#2c1a1e" strokeWidth="1.400" />
          <path d="M12.300 1.300h4.200l-4.200 4.900h4.500" fill="none" stroke="#2c1a1e" strokeWidth="3.600" />
          <path d="M12.300 1.300h4.200l-4.200 4.900h4.500" fill="none" stroke="#fff" strokeWidth="1.400" />
        </svg>
      </IconSlot>
    </Tray>
  </Taskbar>
);

export default function App() {
  return (
    <Screen>
      <GlobalStyle />
      <TabRow />
      <ToolRow />
      <Frame>
        <Viewport>
          <SalesPage />
          <ScrollRail>
            <svg width="13" height="10" viewBox="0 0 13 10"><path d="M6.500.5L12 9H1z" fill="#9f9f9f" stroke="#9f9f9f" strokeLinejoin="round" /></svg>
            <Thumb />
            <svg width="13" height="10" viewBox="0 0 13 10"><path d="M6.500 9.500L12 1H1z" fill="#9f9f9f" stroke="#9f9f9f" strokeLinejoin="round" /></svg>
          </ScrollRail>
        </Viewport>
      </Frame>
      <TaskRow />
    </Screen>
  );
}
